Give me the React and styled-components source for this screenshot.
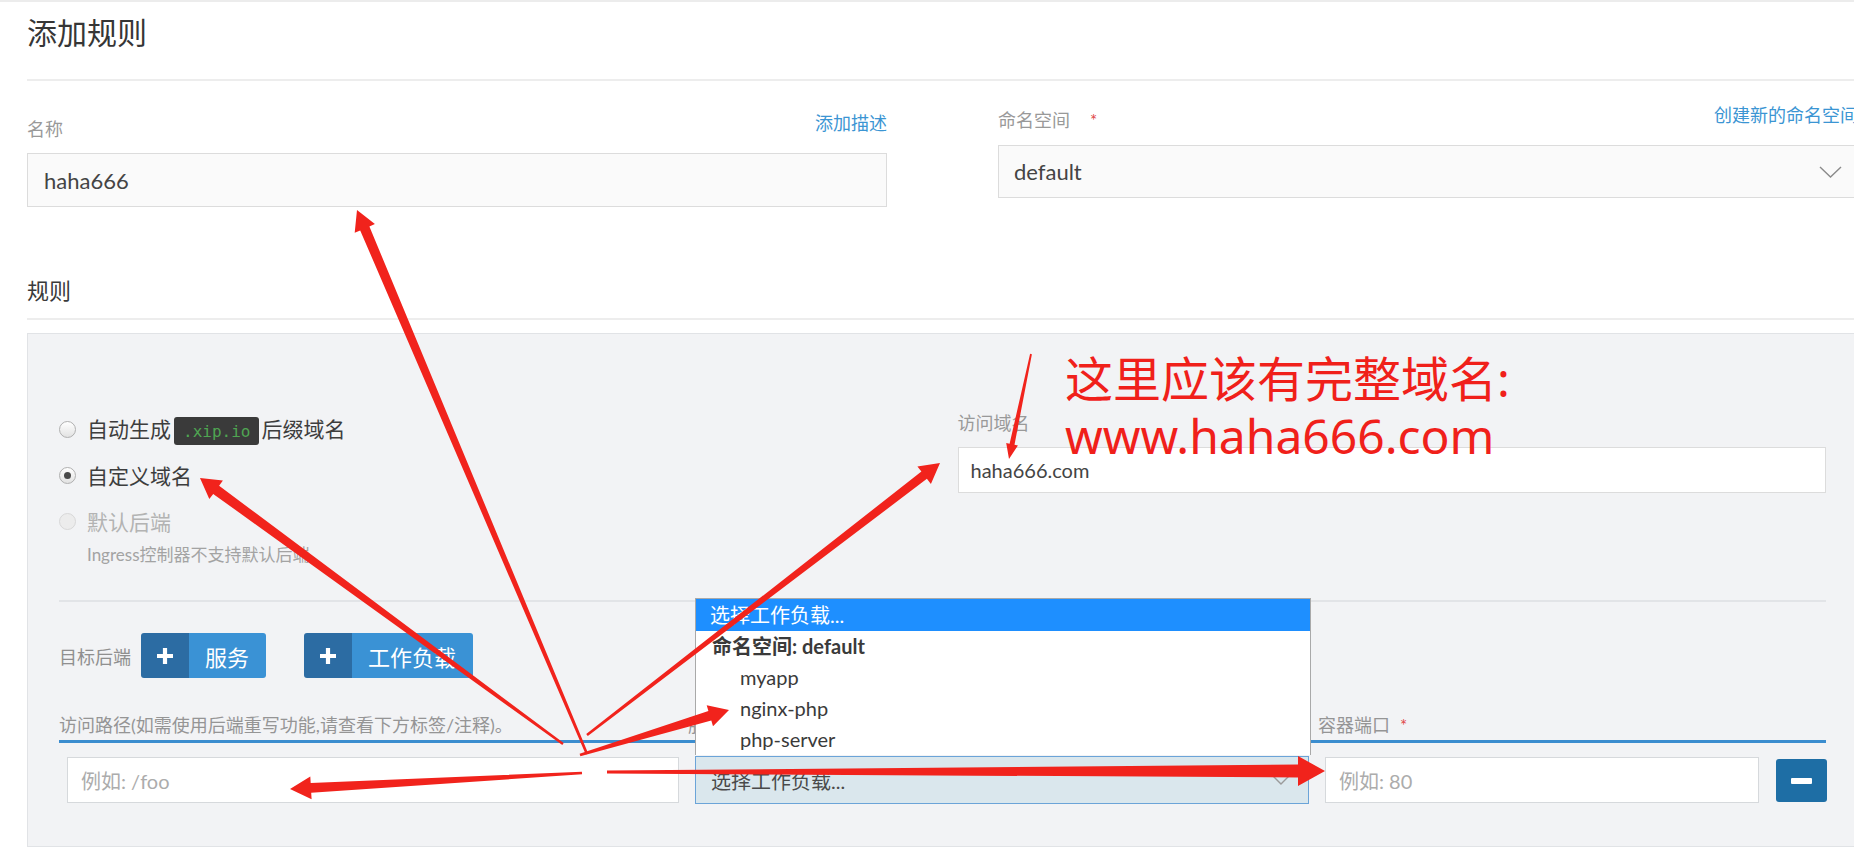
import React from 'react';
import styled, { createGlobalStyle } from 'styled-components';

const Global = createGlobalStyle`
  html, body { margin: 0; padding: 0; background: #fff; overflow: hidden; }
  body { font-family: Lato, "Noto Sans CJK SC", sans-serif; color: #3d3d3d; }
  * { box-sizing: border-box; }
`;

const Page = styled.div`
  position: relative;
  width: 1854px;
  height: 847px;
  overflow: hidden;
  border-top: 2px solid #ececec;
`;

const Content = styled.div`
  width: 1831px;
  margin-left: 27px;
`;

const Header = styled.div`
  padding: 12px 0 29px;
  border-bottom: 2px solid #ededed;
`;

const Title = styled.h1`
  margin: 0;
  font-size: 30px;
  line-height: 36px;
  font-weight: 400;
  color: #363636;
`;

const TopGrid = styled.div`
  display: grid;
  grid-template-columns: 860px 860px;
  column-gap: 111px;
  padding-top: 28px;
`;

const Field = styled.div`
  padding-top: ${(p) => p.$offset || 0}px;
`;

const FieldHead = styled.div`
  display: flex;
  justify-content: space-between;
  align-items: flex-end;
  height: 24px;
  margin-bottom: 12px;
`;

const Label = styled.span`
  font-size: 18px;
  line-height: 24px;
  color: #999;
`;

const Req = styled.span`
  color: #e04848;
  margin-left: ${(p) => p.$gap || 10}px;
  font-size: 17px;
`;

const Link = styled.span`
  font-size: 18px;
  line-height: 24px;
  color: #3b95d3;
  margin-bottom: 6px;
  white-space: nowrap;
`;

const TextBox = styled.div`
  display: flex;
  align-items: center;
  height: ${(p) => p.$h || 54}px;
  border: 1px solid #dcdcdc;
  background: ${(p) => p.$bg || '#fafafa'};
  padding: 0 ${(p) => p.$pad || 16}px;
  font-size: ${(p) => p.$fs || 22}px;
  color: #444;
`;

const SelectBox = styled(TextBox)`
  justify-content: space-between;
`;

const SectionHead = styled.div`
  margin-top: 69px;
  padding-bottom: 12px;
  border-bottom: 2px solid #ededed;
  font-size: 22px;
  line-height: 30px;
  color: #3a3a3a;
`;

const Panel = styled.div`
  margin-top: 13px;
  background: #f2f3f5;
  border: 1px solid #e1e3e6;
  padding: 72px 31px 42px;
`;

const TwoCol = styled.div`
  display: grid;
  grid-template-columns: 1fr 1fr;
  column-gap: 30px;
`;

const RadioList = styled.div`
  display: flex;
  flex-direction: column;
`;

const RadioRow = styled.div`
  display: flex;
  align-items: center;
  height: 46px;
  gap: 11px;
  font-size: 21px;
  color: ${(p) => (p.$disabled ? '#b3b3b3' : '#3d3d3d')};
`;

const RadioDot = styled.span`
  position: relative;
  width: 17px;
  height: 17px;
  border-radius: 50%;
  flex: none;
  border: 1px solid ${(p) => (p.$disabled ? '#d8d8d8' : '#b0b0b0')};
  background: ${(p) => (p.$disabled ? '#ececec' : 'linear-gradient(#ffffff, #e2e2e2)')};
  &::after {
    content: '';
    display: ${(p) => (p.$checked ? 'block' : 'none')};
    position: absolute;
    left: 4px;
    top: 4px;
    width: 7px;
    height: 7px;
    border-radius: 50%;
    background: #4a4a4a;
  }
`;

const Code = styled.span`
  display: inline-flex;
  align-items: center;
  height: 28px;
  padding: 0 9px;
  margin: 0 2px 0 3px;
  border-radius: 3px;
  background: #3a3a3a;
  color: #4fa552;
  font-family: "DejaVu Sans Mono", monospace;
  font-size: 16px;
`;

const Note = styled.div`
  font-size: 17px;
  line-height: 22px;
  color: #a3a3a3;
  padding-left: 28px;
`;

const DomainCol = styled.div`
  padding-top: 5px;
`;

const Separator = styled.div`
  margin-top: 34px;
  height: 2px;
  background: #e2e4e7;
`;

const TargetRow = styled.div`
  display: flex;
  align-items: center;
  margin-top: 31px;
  height: 45px;
`;

const TargetLabel = styled.span`
  font-size: 18px;
  color: #8f8f8f;
  margin-right: 10px;
`;

const AddButton = styled.div`
  display: flex;
  height: 45px;
  border-radius: 3px;
  overflow: hidden;
  margin-right: 38px;
`;

const AddIcon = styled.span`
  display: flex;
  align-items: center;
  justify-content: center;
  width: 48px;
  background: #2c6ca3;
`;

const AddText = styled.span`
  display: flex;
  align-items: center;
  padding: 0 17px 0 16px;
  background: #3a92d5;
  color: #fff;
  font-size: 22px;
`;

const RuleGrid = styled.div`
  display: grid;
  grid-template-columns: 628px 630px 450px 59px;
`;

const RuleHead = styled(RuleGrid)`
  margin-top: 35px;
  padding-bottom: 2px;
  border-bottom: 3px solid #3b8dcf;
`;

const HeadCell = styled.div`
  font-size: 18px;
  line-height: 24px;
  color: #959595;
  padding-left: ${(p) => p.$pl || 0}px;
  white-space: nowrap;
  overflow: hidden;
`;

const RuleBody = styled(RuleGrid)`
  margin-top: 14px;
`;

const Cell = styled.div`
  position: relative;
  padding: 0 ${(p) => (p.$last ? 0 : 8)}px 0 ${(p) => (p.$last ? 9 : 8)}px;
`;

const Input = styled.div`
  display: flex;
  align-items: center;
  height: 46px;
  border: 1px solid #d6d9dc;
  background: #fff;
  padding-left: 13px;
  font-size: 20px;
  color: #acacac;
`;

const WorkSelect = styled.div`
  display: flex;
  align-items: center;
  justify-content: space-between;
  height: 48px;
  margin-top: -1px;
  border: 1px solid #6ba4d8;
  background: #dae7ed;
  padding: 0 18px 0 15px;
  font-size: 20px;
  color: #4a4a4a;
`;

const Dropdown = styled.div`
  position: absolute;
  left: 8px;
  right: 6px;
  bottom: calc(100% + 2px);
  background: #fff;
  border: 1px solid #a9a9a9;
  border-bottom: none;
  font-size: 20px;
  color: #333;
`;

const DropItem = styled.div`
  line-height: ${(p) => (p.$active ? 32 : 31)}px;
  padding-left: ${(p) => p.$indent}px;
  background: ${(p) => (p.$active ? '#1e8fff' : 'transparent')};
  color: ${(p) => (p.$active ? '#fff' : '#3a3a3a')};
  font-weight: ${(p) => (p.$bold ? 700 : 400)};
`;

const MinusButton = styled.div`
  display: flex;
  align-items: center;
  justify-content: center;
  width: 51px;
  height: 43px;
  margin-top: 2px;
  border-radius: 3px;
  background: #1e6ea5;
  &::after {
    content: '';
    width: 21px;
    height: 6px;
    border-radius: 1px;
    background: #fff;
  }
`;

const Overlay = styled.svg`
  position: absolute;
  left: 0;
  top: 0;
  pointer-events: none;
`;

const Annotation = styled.div`
  position: absolute;
  left: 1065px;
  top: 349px;
  color: #f0201a;
  font-family: "Noto Sans", "Noto Sans CJK SC", sans-serif;
  font-size: 48px;
  white-space: nowrap;
`;

const AnnoLine = styled.div`
  line-height: 56px;
  margin-top: ${(p) => p.$mt || 0}px;
`;

const Chevron = ({ w = 23, h = 12, color = '#8a8a8a' }) => (
  <svg width={w} height={h} viewBox={`0 0 ${w} ${h}`}>
    <path d={`M1 1 L${w / 2} ${h - 1} L${w - 1} 1`} fill="none" stroke={color} strokeWidth="1.4" />
  </svg>
);

const Plus = () => (
  <svg width="18" height="18" viewBox="0 0 18 18">
    <path d="M9 1 V17 M1 9 H17" stroke="#fff" strokeWidth="4.2" />
  </svg>
);

function arrowPoints([x1, y1, x2, y2, tw, sw, hl, hw]) {
  const dx = x2 - x1;
  const dy = y2 - y1;
  const L = Math.hypot(dx, dy);
  const ux = dx / L;
  const uy = dy / L;
  const nx = -uy;
  const ny = ux;
  const bx = x2 - ux * hl;
  const by = y2 - uy * hl;
  const p = (x, y) => `${x.toFixed(1)},${y.toFixed(1)}`;
  return [
    p(x1 + (nx * tw) / 2, y1 + (ny * tw) / 2),
    p(bx + (nx * sw) / 2, by + (ny * sw) / 2),
    p(bx + (nx * hw) / 2, by + (ny * hw) / 2),
    p(x2, y2),
    p(bx - (nx * hw) / 2, by - (ny * hw) / 2),
    p(bx - (nx * sw) / 2, by - (ny * sw) / 2),
    p(x1 - (nx * tw) / 2, y1 - (ny * tw) / 2),
  ].join(' ');
}

const arrows = [
  [587, 752, 357, 208, 2.5, 10, 20, 22],
  [563, 742, 200, 476, 2.5, 10, 20, 23],
  [587, 733, 940, 461, 2.5, 9, 20, 22],
  [580, 753, 729, 708, 2.5, 10, 20, 22],
  [582, 771, 290, 787, 2.5, 10, 21, 23],
  [607, 770, 1325, 769, 3, 13, 27, 30],
  [1031, 352, 1009, 457, 1.8, 5, 15, 12],
];

export default function App() {
  return (
    <>
      <Global />
      <Page>
        <Content>
          <Header>
            <Title>添加规则</Title>
          </Header>

          <TopGrid>
            <Field $offset={8}>
              <FieldHead>
                <Label>名称</Label>
                <Link>添加描述</Link>
              </FieldHead>
              <TextBox>haha666</TextBox>
            </Field>
            <Field>
              <FieldHead>
                <Label>
                  命名空间<Req $gap={20}>*</Req>
                </Label>
                <Link>创建新的命名空间</Link>
              </FieldHead>
              <SelectBox $h={53} $pad={15}>
                <span>default</span>
                <Chevron />
              </SelectBox>
            </Field>
          </TopGrid>

          <SectionHead>规则</SectionHead>

          <Panel>
            <TwoCol>
              <RadioList>
                <RadioRow>
                  <RadioDot />
                  <span>
                    自动生成<Code>.xip.io</Code>后缀域名
                  </span>
                </RadioRow>
                <RadioRow>
                  <RadioDot $checked />
                  <span>自定义域名</span>
                </RadioRow>
                <RadioRow $disabled>
                  <RadioDot $disabled />
                  <span>默认后端</span>
                </RadioRow>
                <Note>Ingress控制器不支持默认后端。</Note>
              </RadioList>
              <DomainCol>
                <FieldHead>
                  <Label>访问域名</Label>
                </FieldHead>
                <TextBox $h={46} $bg="#fff" $pad={12} $fs={20}>
                  haha666.com
                </TextBox>
              </DomainCol>
            </TwoCol>

            <Separator />

            <TargetRow>
              <TargetLabel>目标后端</TargetLabel>
              <AddButton>
                <AddIcon>
                  <Plus />
                </AddIcon>
                <AddText>服务</AddText>
              </AddButton>
              <AddButton>
                <AddIcon>
                  <Plus />
                </AddIcon>
                <AddText>工作负载</AddText>
              </AddButton>
            </TargetRow>

            <RuleHead>
              <HeadCell>访问路径(如需使用后端重写功能,请查看下方标签/注释)。</HeadCell>
              <HeadCell $pl={1}>服务</HeadCell>
              <HeadCell $pl={1}>
                容器端口<Req>*</Req>
              </HeadCell>
              <HeadCell />
            </RuleHead>

            <RuleBody>
              <Cell>
                <Input>例如: /foo</Input>
              </Cell>
              <Cell>
                <Dropdown>
                  <DropItem $active $indent={14}>选择工作负载...</DropItem>
                  <DropItem $bold $indent={16}>命名空间: default</DropItem>
                  <DropItem $indent={44}>myapp</DropItem>
                  <DropItem $indent={44}>nginx-php</DropItem>
                  <DropItem $indent={44}>php-server</DropItem>
                </Dropdown>
                <WorkSelect>
                  <span>选择工作负载...</span>
                  <Chevron w={18} h={10} color="#9a9a9a" />
                </WorkSelect>
              </Cell>
              <Cell>
                <Input>例如: 80</Input>
              </Cell>
              <Cell $last>
                <MinusButton />
              </Cell>
            </RuleBody>
          </Panel>
        </Content>

        <Annotation>
          <AnnoLine>这里应该有完整域名:</AnnoLine>
          <AnnoLine $mt={1}>www.haha666.com</AnnoLine>
        </Annotation>

        <Overlay width="1854" height="847" viewBox="0 0 1854 847">
          {arrows.map((a, i) => (
            <polygon key={i} points={arrowPoints(a)} fill="#f1231c" />
          ))}
        </Overlay>
      </Page>
    </>
  );
}
